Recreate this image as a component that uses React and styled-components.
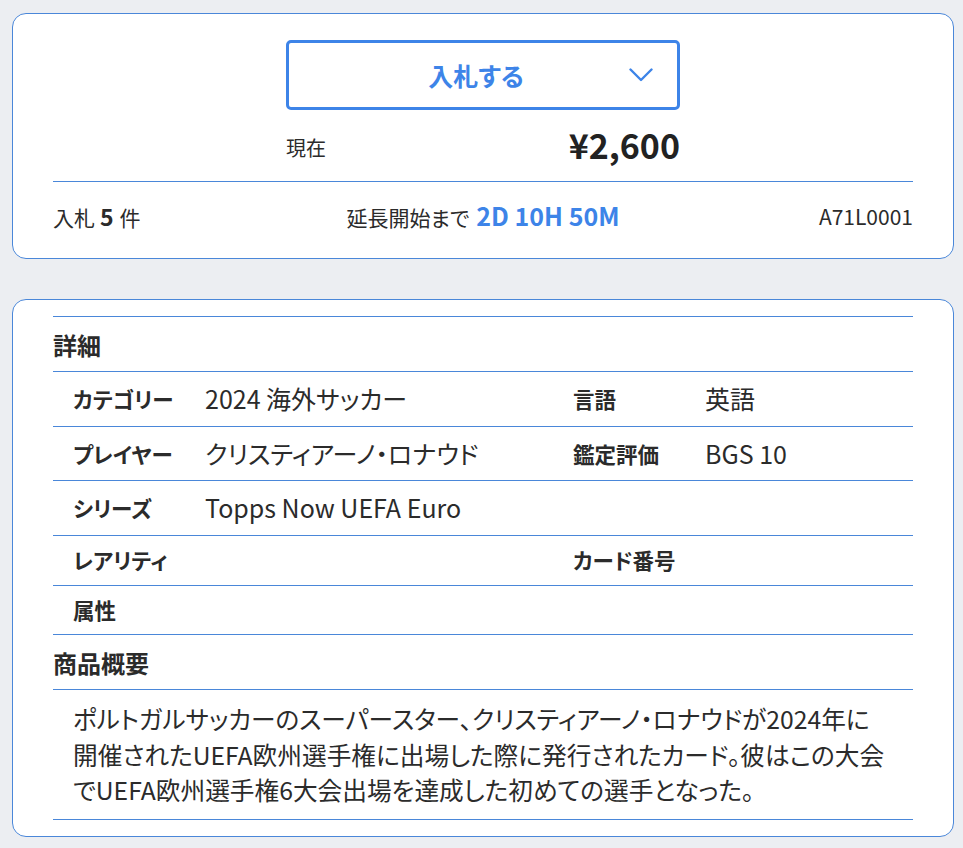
import styled, { createGlobalStyle } from "styled-components";

const GlobalStyle = createGlobalStyle`
  html, body {
    margin: 0;
    background: #eceef2;
  }
  body {
    font-family: "Noto Sans CJK JP", "Noto Sans", sans-serif;
    font-feature-settings: "palt";
    color: #2b2b2b;
  }
`;

const Page = styled.div`
  display: flex;
  flex-direction: column;
  gap: 40px;
  padding: 13px 9px 12px 12px;
`;

const Card = styled.section`
  background: #fff;
  border: 1px solid #4a87d9;
  border-radius: 14px;
  padding: ${(p) => p.$pad};
`;

// ---- 入札パネル
const BidBox = styled.div`
  width: 394px;
  margin: 0 auto;
`;

const BidButton = styled.button`
  position: relative;
  display: flex;
  align-items: center;
  justify-content: center;
  width: 100%;
  height: 70px;
  background: #fff;
  border: 3px solid #3d84e8;
  border-radius: 5px;
  color: #3d84e8;
  font-family: inherit;
  font-feature-settings: "palt";
  font-size: 25px;
  font-weight: 700;
  padding: 0 14px 0 0;
  cursor: pointer;

  & svg {
    position: absolute;
    right: 24px;
    top: 50%;
    transform: translateY(-50%);
  }
`;

const PriceRow = styled.div`
  display: flex;
  justify-content: space-between;
  align-items: center;
  margin-top: 14px;
  height: 40px;
`;

const PriceLabel = styled.span`
  font-size: 20px;
  padding-top: 6px;
`;

const Price = styled.span`
  font-size: 34px;
  font-weight: 700;
  color: #222;
`;

const Divider = styled.hr`
  border: 0;
  border-top: 1px solid #4a87d9;
  margin: 17px 0 0;
`;

const Footer = styled.div`
  display: grid;
  grid-template-columns: 1fr auto 1fr;
  align-items: center;
  padding: 18px 0 18px;
  font-size: 21px;
  line-height: 30px;
`;

const FooterRight = styled.span`
  justify-self: end;
`;

const Count = styled.b`
  font-size: 23px;
  margin: 0 6px 0 5px;
`;

const Remain = styled.b`
  color: #3d84e8;
  font-size: 25px;
  margin-left: 7px;
`;

// ---- 詳細テーブル
const Rule = styled.div`
  border-top: 1px solid #4a87d9;
`;

const Heading = styled.h3`
  margin: 0;
  font-size: 24px;
  font-weight: 700;
  line-height: 30px;
  padding: 13px 0 11px;
  border-bottom: 1px solid #4a87d9;
`;

const Row = styled.div`
  display: grid;
  grid-template-columns: 152px 368px 132px 1fr;
  align-items: center;
  padding: 11px 0;
  border-bottom: 1px solid #4a87d9;
  line-height: ${(p) => (p.$tall ? "31.7px" : "26.5px")};
`;

const Label = styled.span`
  font-size: 21.5px;
  font-weight: 700;
  padding-left: ${(p) => (p.$first ? "20px" : "0")};
`;

const Value = styled.span`
  font-size: 25px;
`;

const Summary = styled.p`
  margin: 0;
  padding: 11px 0 11px 20px;
  font-size: 24.7px;
  line-height: 35.5px;
  border-bottom: 1px solid #4a87d9;
`;

const Chevron = () => (
  <svg width="24" height="14" viewBox="0 0 24 14" fill="none">
    <path d="M1.5 1.5 L12 12 L22.5 1.5" stroke="#3d84e8" strokeWidth="2.4" strokeLinecap="round" strokeLinejoin="round" />
  </svg>
);

const specs = [
  ["カテゴリー", "2024 海外サッカー", "言語", "英語"],
  ["プレイヤー", "クリスティアーノ・ロナウド", "鑑定評価", "BGS 10"],
  ["シリーズ", "Topps Now UEFA Euro", "", ""],
  ["レアリティ", "", "カード番号", ""],
  ["属性", "", "", ""],
];

const summaryLines = [
  "ポルトガルサッカーのスーパースター、クリスティアーノ・ロナウドが2024年に",
  "開催されたUEFA欧州選手権に出場した際に発行されたカード。彼はこの大会",
  "でUEFA欧州選手権6大会出場を達成した初めての選手となった。",
];

export default function App() {
  return (
    <>
      <GlobalStyle />
      <Page>
        <Card $pad="26px 40px 8px">
          <BidBox>
            <BidButton>
              入札する
              <Chevron />
            </BidButton>
            <PriceRow>
              <PriceLabel>現在</PriceLabel>
              <Price>¥2,600</Price>
            </PriceRow>
          </BidBox>
          <Divider />
          <Footer>
            <span>
              入札<Count>5</Count>件
            </span>
            <span>
              延長開始まで<Remain>2D 10H 50M</Remain>
            </span>
            <FooterRight>A71L0001</FooterRight>
          </Footer>
        </Card>

        <Card $pad="16px 40px 16px">
          <Rule />
          <Heading>詳細</Heading>
          {specs.map(([l1, v1, l2, v2]) => (
            <Row key={l1} $tall={!!(v1 || v2)}>
              <Label $first>{l1}</Label>
              <Value>{v1}</Value>
              <Label>{l2}</Label>
              <Value>{v2}</Value>
            </Row>
          ))}
          <Heading>商品概要</Heading>
          <Summary>
            {summaryLines.map((line, i) => (
              <span key={i}>
                {line}
                {i < summaryLines.length - 1 && <br />}
              </span>
            ))}
          </Summary>
        </Card>
      </Page>
    </>
  );
}
